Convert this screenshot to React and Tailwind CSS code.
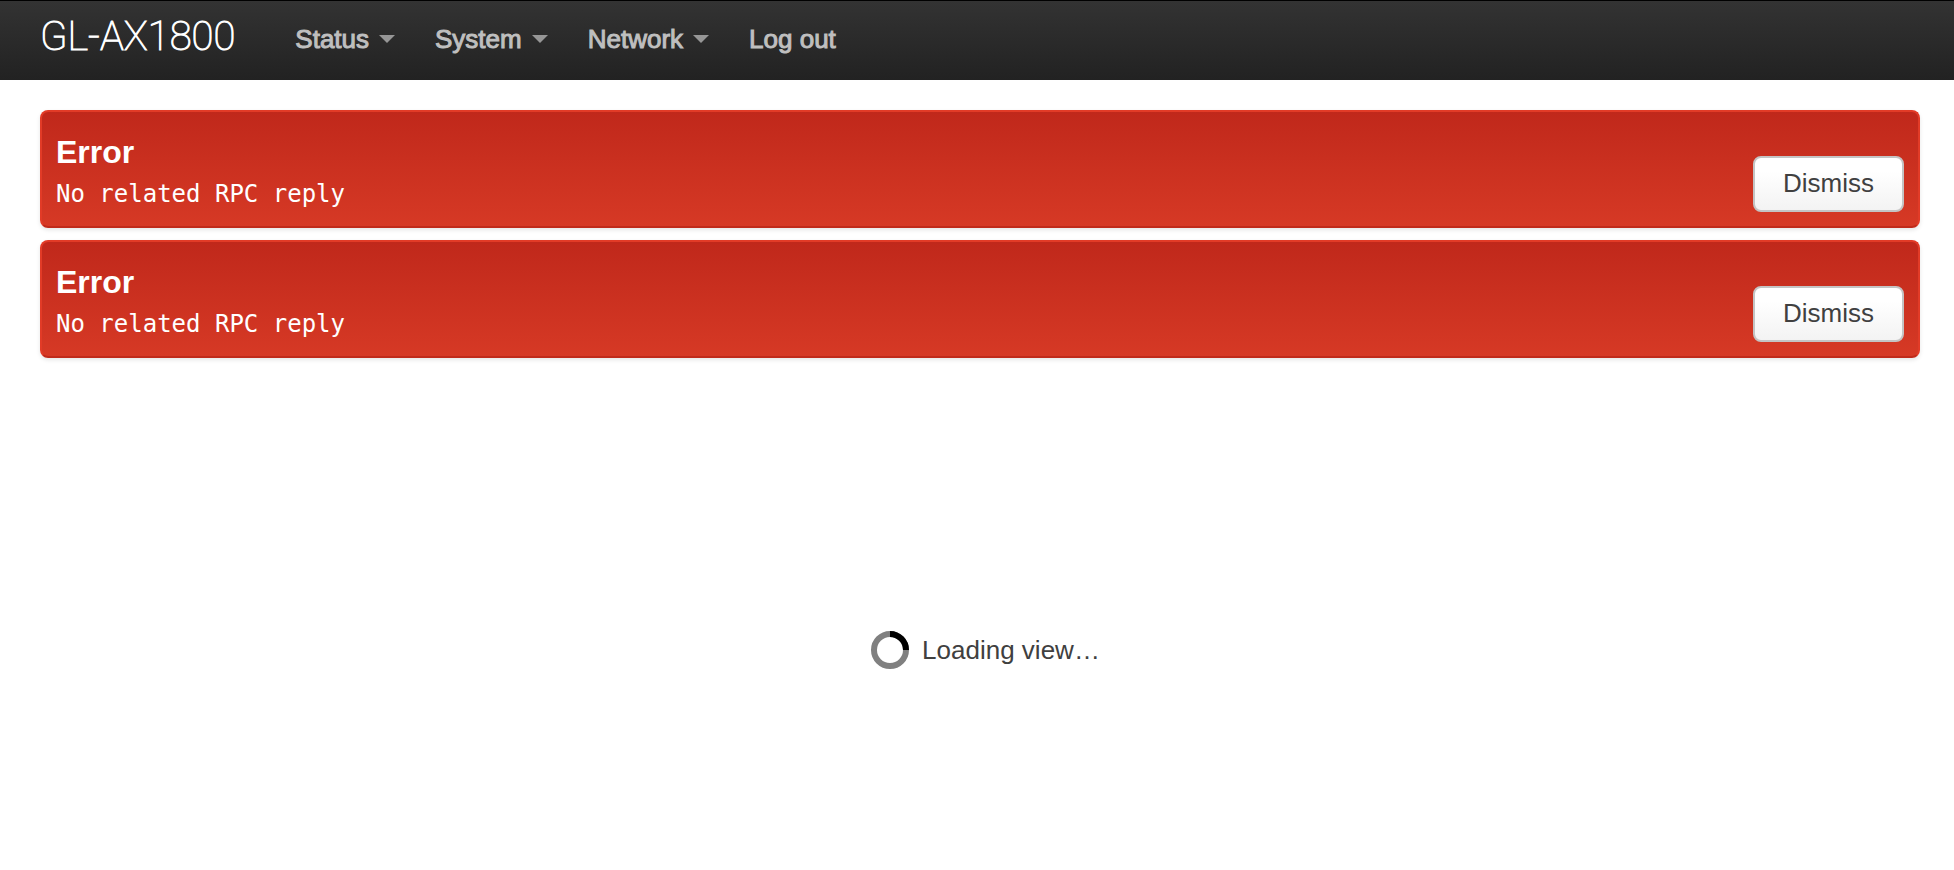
import React, { useState } from "react";

const menuItems = [
  { label: "Status", dropdown: true },
  { label: "System", dropdown: true },
  { label: "Network", dropdown: true },
  { label: "Log out", dropdown: false },
];

const initialErrors = [
  { id: 1, title: "Error", message: "No related RPC reply" },
  { id: 2, title: "Error", message: "No related RPC reply" },
];

function Header() {
  return (
    <header className="flex h-20 items-center border-t border-black bg-linear-to-b from-[#333333] to-[#222222] px-10 pb-2">
      <a
        className="font-[Roboto] text-[40px] font-thin leading-10 text-white [-webkit-text-stroke:1px_#ffffff]"
        href="#home"
      >
        GL-AX1800
      </a>
      <nav className="ml-10 pt-1">
        <ul className="flex">
          {menuItems.map((item) => (
            <li key={item.label}>
              <a
                className="flex items-center gap-2.5 px-5 text-[26px] leading-8 text-[#bfbfbf] [text-shadow:0_-1px_0_rgba(0,0,0,0.25)] [-webkit-text-stroke:1px_#bfbfbf]"
                href="#menu"
              >
                {item.label}
                {item.dropdown && (
                  <svg className="h-2 w-4 fill-[#969696]" viewBox="0 0 16 8" aria-hidden="true">
                    <path d="M0 0h16L8 8z" />
                  </svg>
                )}
              </a>
            </li>
          ))}
        </ul>
      </nav>
    </header>
  );
}

function ErrorAlert({ title, message, onDismiss }) {
  return (
    <div
      className="flex items-end justify-between rounded-lg border-2 border-x-[#e23b27] border-t-[#e23b27] border-b-[#c02a1a] bg-linear-to-b from-[#c0281b] to-[#d63925] p-3.5 pt-6 text-white shadow-[0_2px_4px_rgba(0,0,0,0.1)]"
      role="alert"
    >
      <div className="pb-0.5">
        <h4 className="text-[32px] font-bold leading-8">{title}</h4>
        <p className="pt-2.5 font-['DejaVu_Sans_Mono',monospace] text-[24px] leading-8">{message}</p>
      </div>
      <button
        className="h-14 cursor-pointer rounded-lg border-2 border-[#c4c4c4] bg-linear-to-b from-white from-25% to-[#f3f3f3] px-7 pb-0.5 text-[26px] leading-8 text-[#404040]"
        type="button"
        onClick={onDismiss}
      >
        Dismiss
      </button>
    </div>
  );
}

function Loading() {
  return (
    <div className="flex items-center justify-center gap-3 text-[26px] leading-8 text-[#404040]" role="status">
      <svg className="size-10" viewBox="0 0 40 40" fill="none" strokeWidth="6" aria-hidden="true">
        <circle cx="20" cy="20" r="16" stroke="#808080" />
        <path d="M20 4a16 16 0 0 1 16 16" stroke="#000000" />
      </svg>
      Loading view…
    </div>
  );
}

export default function App() {
  const [errors, setErrors] = useState(initialErrors);

  function dismiss(id) {
    setErrors(errors.filter((error) => error.id !== id));
  }

  return (
    <div className="min-h-screen bg-white font-['Liberation_Sans',Arial,sans-serif]">
      <Header />
      <main className="pt-[30px] pr-[34px] pl-10">
        <div className="flex flex-col gap-3">
          {errors.map((error) => (
            <ErrorAlert key={error.id} title={error.title} message={error.message} onDismiss={() => dismiss(error.id)} />
          ))}
        </div>
        <div className="pt-[272px] pl-2.5">
          <Loading />
        </div>
      </main>
    </div>
  );
}
